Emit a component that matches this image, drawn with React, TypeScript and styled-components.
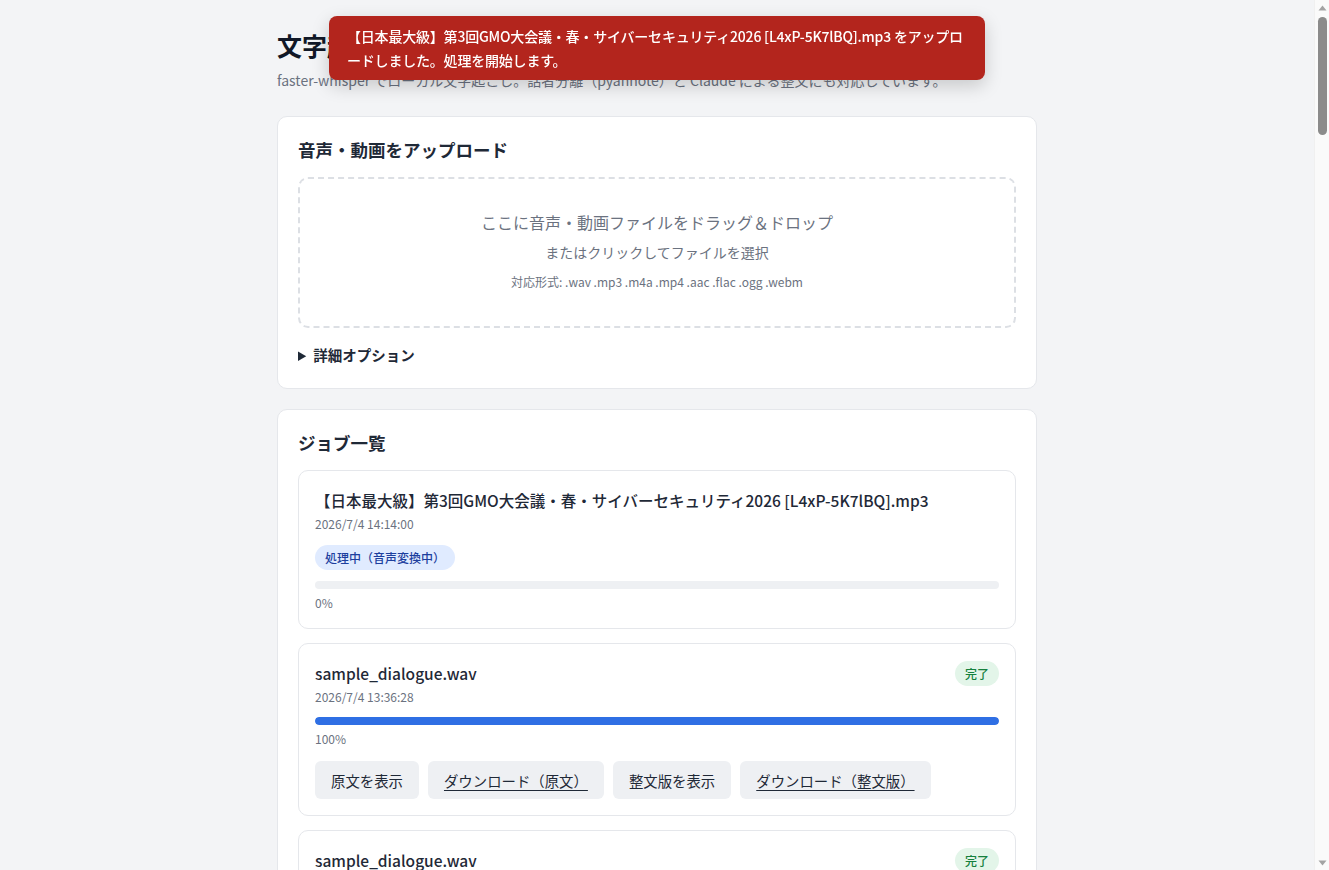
import React from 'react'
import styled, { createGlobalStyle } from 'styled-components'

type JobStatus = 'processing' | 'done'

interface Job {
  id: number
  name: string
  createdAt: string
  status: JobStatus
  statusLabel: string
  progress: number
}

const FONT = `"Noto Sans CJK JP", "Noto Sans", sans-serif`

const GlobalStyle = createGlobalStyle`
  html, body {
    margin: 0;
    padding: 0;
    background: #f3f4f6;
    color: #1f2937;
    font-family: ${FONT};
  }
  body {
    padding-right: 15px;
  }
  * {
    box-sizing: border-box;
  }
`

const jobs: Job[] = [
  {
    id: 0,
    name: '【日本最大級】第3回GMO大会議・春・サイバーセキュリティ2026 [L4xP-5K7lBQ].mp3',
    createdAt: '2026/7/4 14:14:00',
    status: 'processing',
    statusLabel: '処理中（音声変換中）',
    progress: 0,
  },
  {
    id: 1,
    name: 'sample_dialogue.wav',
    createdAt: '2026/7/4 13:36:28',
    status: 'done',
    statusLabel: '完了',
    progress: 100,
  },
  {
    id: 2,
    name: 'sample_dialogue.wav',
    createdAt: '2026/7/4 13:21:05',
    status: 'done',
    statusLabel: '完了',
    progress: 100,
  },
]

const JobCard = ({ job }: { job: Job }): React.ReactElement => {
  const done = job.status === 'done'
  return (
    <JobItem>
      <JobHead>
        <JobName>{job.name}</JobName>
        {done && <Badge $tone="green">{job.statusLabel}</Badge>}
      </JobHead>
      <JobDate>{job.createdAt}</JobDate>
      {!done && (
        <StatusRow>
          <Badge $tone="blue">{job.statusLabel}</Badge>
        </StatusRow>
      )}
      <Progress>
        <ProgressFill style={{ width: `${job.progress}%` }} />
      </Progress>
      <Percent>{job.progress}%</Percent>
      {done && (
        <Actions>
          <ActionButton type="button">原文を表示</ActionButton>
          <ActionLink href="#">ダウンロード（原文）</ActionLink>
          <ActionButton type="button">整文版を表示</ActionButton>
          <ActionLink href="#">ダウンロード（整文版）</ActionLink>
        </Actions>
      )}
    </JobItem>
  )
}

const App = (): React.ReactElement => {
  return (
    <>
      <GlobalStyle />
      <Toast>
        【日本最大級】第3回GMO大会議・春・サイバーセキュリティ2026 [L4xP-5K7lBQ].mp3
        をアップロードしました。処理を開始します。
      </Toast>
      <Main>
        <Header>
          <Title>文字起こしツール</Title>
          <Lead>
            faster-whisper でローカル文字起こし。話者分離（pyannote）と Claude
            による整文にも対応しています。
          </Lead>
        </Header>

        <Card>
          <CardTitle>音声・動画をアップロード</CardTitle>
          <DropZone>
            <DropMain>ここに音声・動画ファイルをドラッグ＆ドロップ</DropMain>
            <DropSub>またはクリックしてファイルを選択</DropSub>
            <DropHint>対応形式: .wav .mp3 .m4a .mp4 .aac .flac .ogg .webm</DropHint>
          </DropZone>
          <Options>
            <OptionsSummary>詳細オプション</OptionsSummary>
          </Options>
        </Card>

        <Card>
          <CardTitle>ジョブ一覧</CardTitle>
          <JobList>
            {jobs.map((job) => (
              <JobCard key={job.id} job={job} />
            ))}
          </JobList>
        </Card>
      </Main>

      <ScrollTrack>
        <ScrollArrow viewBox="0 0 9 6" $down={false}>
          <path d="M4.5 0.5 L8.5 5.5 L0.5 5.5 Z" />
        </ScrollArrow>
        <ScrollThumb />
        <ScrollArrow viewBox="0 0 9 6" $down>
          <path d="M0.5 0.5 L8.5 0.5 L4.5 5.5 Z" />
        </ScrollArrow>
      </ScrollTrack>
    </>
  )
}

const Toast = styled.div`
  position: fixed;
  top: 16px;
  left: calc(50% - 7.5px);
  transform: translateX(-50%);
  width: 656px;
  padding: 8px 18px;
  background: #b3251d;
  color: #fff;
  font-size: 14px;
  font-weight: 500;
  line-height: 24px;
  letter-spacing: -0.2px;
  border-radius: 8px;
  box-shadow: 0 6px 18px rgba(0, 0, 0, 0.18);
  z-index: 10;
`

const ScrollTrack = styled.div`
  position: fixed;
  top: 0;
  right: 0;
  width: 15px;
  height: 100vh;
  background: #fafafa;
  border-left: 1px solid #f0f0f0;
  display: flex;
  flex-direction: column;
  align-items: center;
  padding: 5px 0 4px;
  z-index: 20;
`

const ScrollArrow = styled.svg<{ $down: boolean }>`
  width: 9px;
  height: 6px;
  fill: #a3a3a3;
  margin-top: ${(p) => (p.$down ? 'auto' : '0')};
`

const ScrollThumb = styled.div`
  margin-top: 6px;
  width: 9px;
  height: 118px;
  border-radius: 5px;
  background: #8b8b8b;
`

const Main = styled.main`
  max-width: 760px;
  margin: 0 auto;
  padding: 27px 0 40px;
  display: flex;
  flex-direction: column;
  gap: 20px;
`

const Header = styled.header`
  display: flex;
  flex-direction: column;
  gap: 7px;
  margin-bottom: 6px;
`

const Title = styled.h1`
  margin: 0;
  font-size: 25px;
  font-weight: 700;
  line-height: 36px;
  color: #111827;
`

const Lead = styled.p`
  margin: 0;
  font-size: 14px;
  line-height: 20px;
  color: #6b7280;
`

const Card = styled.section`
  background: #fff;
  border: 1px solid #e5e7eb;
  border-radius: 10px;
  padding: 20px 20px 23px;
`

const CardTitle = styled.h2`
  margin: 0 0 14px;
  font-size: 17.5px;
  font-weight: 700;
  line-height: 26px;
  color: #1f2937;
`

const DropZone = styled.div`
  border: 2px dashed #dcdfe4;
  border-radius: 10px;
  padding: 32px 20px 35px;
  display: flex;
  flex-direction: column;
  align-items: center;
  color: #6b7280;
  cursor: pointer;
`

const DropMain = styled.p`
  margin: 0;
  font-size: 16px;
  line-height: 22px;
`

const DropSub = styled.p`
  margin: 8px 0 0;
  font-size: 14px;
  line-height: 22px;
`

const DropHint = styled.p`
  margin: 10px 0 0;
  font-size: 12px;
  line-height: 18px;
`

const Options = styled.details`
  margin-top: 17px;
`

const OptionsSummary = styled.summary`
  font-size: 14.5px;
  font-weight: 700;
  line-height: 20px;
  color: #1f2937;
  cursor: pointer;
`

const JobList = styled.div`
  display: flex;
  flex-direction: column;
  gap: 14px;
`

const JobItem = styled.article`
  border: 1px solid #e5e7eb;
  border-radius: 10px;
  padding: 16px 16px 16px;
`

const JobHead = styled.div`
  display: flex;
  justify-content: space-between;
  align-items: center;
  gap: 12px;
  min-height: 26px;
`

const JobName = styled.div`
  font-size: 15.5px;
  font-weight: 500;
  line-height: 22px;
  color: #1f2937;
`

const JobDate = styled.div`
  margin-top: 2px;
  font-size: 12px;
  line-height: 18px;
  color: #6b7280;
`

const StatusRow = styled.div`
  display: flex;
  margin-top: 12px;
`

const Badge = styled.span<{ $tone: 'blue' | 'green' }>`
  display: inline-block;
  padding: 4px 10px;
  border-radius: 13px;
  font-size: 12px;
  font-weight: 500;
  line-height: 17px;
  white-space: nowrap;
  background: ${(p) => (p.$tone === 'blue' ? '#e0ebff' : '#e3f5e9')};
  color: ${(p) => (p.$tone === 'blue' ? '#1d3f9e' : '#15803d')};
`

const Progress = styled.div`
  margin-top: 11px;
  height: 8px;
  border-radius: 4px;
  background: #eef0f3;
  overflow: hidden;
`

const ProgressFill = styled.div`
  height: 100%;
  background: #2f6fe4;
  border-radius: 4px;
`

const Percent = styled.div`
  margin-top: 5px;
  font-size: 12px;
  line-height: 18px;
  color: #6b7280;
`

const Actions = styled.div`
  display: flex;
  flex-wrap: wrap;
  gap: 9px;
  margin-top: 13px;
`

const buttonBase = `
  display: inline-flex;
  align-items: center;
  height: 38px;
  padding: 0 16px;
  border: none;
  border-radius: 6px;
  background: #eef0f3;
  color: #1f2937;
  font-family: ${FONT};
  font-size: 14.4px;
  cursor: pointer;
`

const ActionButton = styled.button`
  ${buttonBase}
`

const ActionLink = styled.a`
  ${buttonBase}
  text-decoration: underline;
  text-underline-offset: 3px;
`

export default App
